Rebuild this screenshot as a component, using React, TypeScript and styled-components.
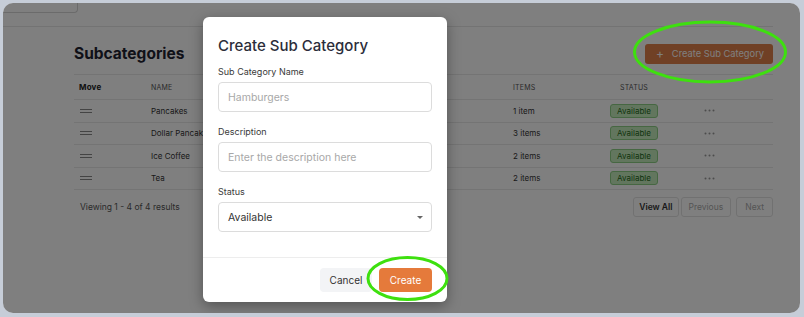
import React from 'react'
import styled, { createGlobalStyle } from 'styled-components'

const GlobalStyle = createGlobalStyle`
  html, body {
    margin: 0;
    padding: 0;
    background: #c6cdd8;
    font-family: Inter, "Noto Sans", sans-serif;
  }
  * { box-sizing: border-box; }
`

const Frame = styled.div`
  position: relative;
  width: 804px;
  height: 317px;
  padding: 3px 4px 4px 3px;
`

const Window = styled.div`
  position: relative;
  width: 797px;
  height: 310px;
  border-radius: 10px;
  overflow: hidden;
  background: #ffffff;
`

const TopBar = styled.div`
  height: 24px;
  width: 770px;
  border-bottom: 1px solid #e6e6e6;
`

const TopTab = styled.div`
  width: 75px;
  height: 10px;
  border-right: 1px solid #d6d6d6;
  border-bottom: 1px solid #d6d6d6;
  border-bottom-right-radius: 4px;
`

const Content = styled.div`
  padding: 14px 27px 0 71px;
`

const TitleRow = styled.div`
  display: flex;
  align-items: center;
  justify-content: space-between;
  height: 25px;
`

const PageTitle = styled.h1`
  margin: 0;
  font-size: 15.5px;
  font-weight: 700;
  color: #1f2230;
`

const PrimaryButton = styled.button`
  display: flex;
  align-items: center;
  gap: 8px;
  height: 20px;
  padding: 0 9px 0 11px;
  border: none;
  border-radius: 3px;
  background: #e0804a;
  color: #ffffff;
  font-family: inherit;
  font-size: 9.3px;
`

const Table = styled.div`
  margin-top: 8px;
  border-top: 1px solid #e8e8e8;
`

const Row = styled.div<{ $head?: boolean }>`
  display: grid;
  grid-template-columns: 72px 362px 82px 88px 62px 1fr;
  align-items: center;
  height: ${p => (p.$head ? '25px' : '22.5px')};
  border-bottom: 1px solid #e8e8e8;
  font-size: ${p => (p.$head ? '7px' : '8px')};
  color: ${p => (p.$head ? '#555' : '#333')};
  letter-spacing: ${p => (p.$head ? '0.2px' : '0')};
`

const Cell = styled.div<{ $center?: boolean; $bold?: boolean }>`
  padding-left: ${p => (p.$center ? '0' : '5px')};
  display: flex;
  justify-content: ${p => (p.$center ? 'center' : 'flex-start')};
  font-weight: ${p => (p.$bold ? 700 : 400)};
  font-size: ${p => (p.$bold ? '8px' : 'inherit')};
  color: ${p => (p.$bold ? '#222' : 'inherit')};
`

const Badge = styled.span`
  display: inline-block;
  padding: 1px 6px;
  border: 1px solid #8ccf84;
  border-radius: 3px;
  background: #c4ecbc;
  color: #1f6b1a;
  font-size: 8px;
`

const Footer = styled.div`
  display: flex;
  align-items: center;
  justify-content: space-between;
  margin-top: 7px;
  padding-left: 6px;
`

const ResultText = styled.span`
  font-size: 8.5px;
  color: #555;
`

const Pager = styled.div`
  display: flex;
  gap: 2px;
`

const PageButton = styled.button<{ $muted?: boolean; $gap?: number; $pad?: number }>`
  height: 20px;
  padding: 0 ${p => p.$pad ?? 6}px;
  margin-left: ${p => p.$gap ?? 0}px;
  border: 1px solid #e2e2e2;
  border-radius: 3px;
  background: #ffffff;
  font-family: inherit;
  font-size: 8.5px;
  font-weight: ${p => (p.$muted ? 400 : 600)};
  color: ${p => (p.$muted ? '#aaa' : '#333')};
`

const Overlay = styled.div`
  position: absolute;
  inset: 0;
  background: rgba(0, 0, 0, 0.5);
`

const Modal = styled.div`
  position: absolute;
  left: 200px;
  top: 14px;
  width: 244px;
  height: 285px;
  border-radius: 6px;
  background: #ffffff;
  box-shadow: 0 4px 14px rgba(0, 0, 0, 0.35);
  display: flex;
  flex-direction: column;
`

const ModalBody = styled.div`
  padding: 20px 15px 0 15px;
  flex: 1;
`

const ModalTitle = styled.h2`
  margin: 0 0 11px 0;
  font-size: 15px;
  font-weight: 500;
  color: #2b2d3a;
  line-height: 18px;
`

const Field = styled.div`
  display: flex;
  flex-direction: column;
  gap: 5px;
  margin-bottom: 14px;
`

const Label = styled.label`
  font-size: 9px;
  line-height: 11px;
  color: #3a3a3a;
`

const InputBox = styled.div<{ $filled?: boolean }>`
  position: relative;
  display: flex;
  align-items: center;
  height: 30px;
  padding: 0 9px;
  border: 1px solid #dcdcdc;
  border-radius: 4px;
  font-size: 10.5px;
  color: ${p => (p.$filled ? '#333' : '#a8a8a8')};
`

const Caret = styled.span`
  position: absolute;
  right: 8px;
  top: 13px;
  width: 0;
  height: 0;
  border-left: 3px solid transparent;
  border-right: 3px solid transparent;
  border-top: 3px solid #666;
`

const ModalFooter = styled.div`
  display: flex;
  justify-content: flex-end;
  gap: 7px;
  padding: 10px 15px 10px 15px;
  border-top: 1px solid #ededed;
`

const CancelButton = styled.button`
  height: 24px;
  width: 52px;
  border: none;
  border-radius: 4px;
  background: #f3f4f6;
  color: #333;
  font-family: inherit;
  font-size: 10px;
`

const CreateButton = styled(CancelButton)`
  width: 53px;
  background: #e57a3b;
  color: #ffffff;
`

const Annotations = styled.svg`
  position: absolute;
  left: 0;
  top: 0;
  pointer-events: none;
`

const DragIcon = () => (
  <svg width="12" height="4" viewBox="0 0 12 4">
    <line x1="0" y1="0.5" x2="12" y2="0.5" stroke="#888" strokeWidth="1" />
    <line x1="0" y1="3.5" x2="12" y2="3.5" stroke="#888" strokeWidth="1" />
  </svg>
)

const Dots = () => (
  <svg width="11" height="3" viewBox="0 0 11 3">
    <circle cx="1.5" cy="1.5" r="1" fill="#999" />
    <circle cx="5.5" cy="1.5" r="1" fill="#999" />
    <circle cx="9.5" cy="1.5" r="1" fill="#999" />
  </svg>
)

const rows = [
  { name: 'Pancakes', items: '1 item' },
  { name: 'Dollar Pancakes', items: '3 items' },
  { name: 'Ice Coffee', items: '2 items' },
  { name: 'Tea', items: '2 items' },
]

export default function App() {
  return (
    <Frame>
      <GlobalStyle />
      <Window>
        <TopBar>
          <TopTab />
        </TopBar>
        <Content>
          <TitleRow>
            <PageTitle>Subcategories</PageTitle>
            <PrimaryButton>
              <span style={{ fontSize: 12 }}>+</span> Create Sub Category
            </PrimaryButton>
          </TitleRow>
          <Table>
            <Row $head>
              <Cell $bold>Move</Cell>
              <Cell>NAME</Cell>
              <Cell>ITEMS</Cell>
              <Cell $center>STATUS</Cell>
              <Cell />
              <Cell />
            </Row>
            {rows.map(r => (
              <Row key={r.name}>
                <Cell style={{ paddingLeft: 6 }}>
                  <DragIcon />
                </Cell>
                <Cell>{r.name}</Cell>
                <Cell>{r.items}</Cell>
                <Cell $center>
                  <Badge>Available</Badge>
                </Cell>
                <Cell $center>
                  <Dots />
                </Cell>
                <Cell />
              </Row>
            ))}
          </Table>
          <Footer>
            <ResultText>Viewing 1 - 4 of 4 results</ResultText>
            <Pager>
              <PageButton $pad={5}>View All</PageButton>
              <PageButton $muted $pad={7}>Previous</PageButton>
              <PageButton $muted $gap={3} $pad={8}>Next</PageButton>
            </Pager>
          </Footer>
        </Content>

        <Overlay />

        <Modal>
          <ModalBody>
            <ModalTitle>Create Sub Category</ModalTitle>
            <Field>
              <Label>Sub Category Name</Label>
              <InputBox>Hamburgers</InputBox>
            </Field>
            <Field>
              <Label>Description</Label>
              <InputBox>Enter the description here</InputBox>
            </Field>
            <Field>
              <Label>Status</Label>
              <InputBox $filled>
                Available
                <Caret />
              </InputBox>
            </Field>
          </ModalBody>
          <ModalFooter>
            <CancelButton>Cancel</CancelButton>
            <CreateButton>Create</CreateButton>
          </ModalFooter>
        </Modal>
      </Window>

      <Annotations width="804" height="317" viewBox="0 0 804 317">
        <ellipse cx="710" cy="52" rx="75.5" ry="30" fill="none" stroke="#3ee00f" strokeWidth="3" />
        <ellipse cx="407.5" cy="278.5" rx="39.5" ry="21" fill="none" stroke="#3ee00f" strokeWidth="3" />
      </Annotations>
    </Frame>
  )
}
